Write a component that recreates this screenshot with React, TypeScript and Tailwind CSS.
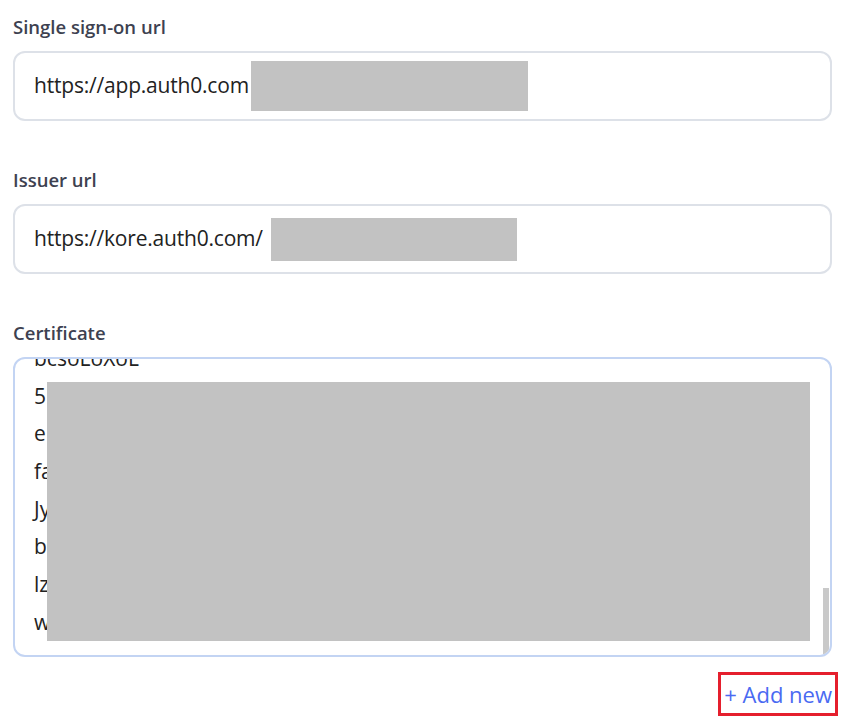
import React from 'react';

const labelCls = "h-[39px] pt-[2px] text-[18.5px] leading-[26px] font-semibold text-[#3d4150]";
const font = { fontFamily: '"Open Sans", "Noto Sans", sans-serif' };

const certLines = ['bcsoLoXoL', '5', 'e', 'fa', 'Jy', 'b', 'lz', 'w:'];

const UrlField: React.FC<{ label: string; value: string; maskCls: string }> = ({ label, value, maskCls }) => (
  <div>
    <div className={labelCls}>{label}</div>
    <div className="flex items-center h-[70px] rounded-[12px] border-2 border-[#dde1e8] bg-white pl-[19px]">
      <span className="text-[21px] text-[#222] tracking-[-0.2px]">{value}</span>
      <span className={`inline-block bg-[#c2c2c2] ${maskCls}`} />
    </div>
  </div>
);

export default function App() {
  return (
    <div className="w-[843px] h-[720px] bg-white pl-[13px] pr-[11px] pt-[12px]" style={font}>
      <UrlField label="Single sign-on url" value="https://app.auth0.com" maskCls="w-[277px] h-[50px] ml-[2px]" />
      <div className="h-[44px]" />
      <UrlField label="Issuer url" value="https://kore.auth0.com/" maskCls="w-[246px] h-[43px] ml-[8px]" />
      <div className="h-[44px]" />
      <div>
        <div className={labelCls}>Certificate</div>
        <div className="relative h-[300px] overflow-hidden rounded-[12px] border-2 border-[#c3d4f3] bg-white">
          <div className="-mt-[19px] pl-[19px]">
            {certLines.map((l, i) => (
              <div key={i} className="h-[37.7px] leading-[37.7px] text-[21px] text-[#222]">{l}</div>
            ))}
          </div>
          <div className="absolute left-[32px] top-[23px] w-[763px] h-[259px] bg-[#c2c2c2]" />
          <div className="absolute right-[1px] top-[229px] w-[6px] h-[66px] bg-[#c9c9c9]" />
        </div>
      </div>
      <div className="flex justify-end pt-[15px]">
        <div className="-mr-[6px] border-[3px] border-[#e51f2d] px-[3px] h-[44px] flex items-center">
          <span className="text-[22px] text-[#4a6af2]">+ Add new</span>
        </div>
      </div>
    </div>
  );
}
